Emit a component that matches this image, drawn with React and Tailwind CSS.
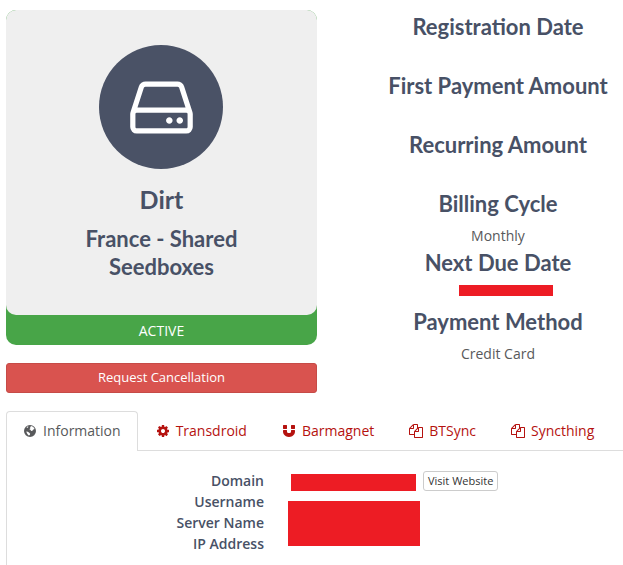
import React, { useState } from 'react';

const Icon = ({ d, className }) => (
  <svg viewBox="0 0 1792 1792" fill="currentColor" aria-hidden="true" className={className}>
    <path d={d} />
  </svg>
);

const hddPath =
  'M1168 1216q0 33-23.5 56.5t-56.5 23.5-56.5-23.5-23.5-56.5 23.5-56.5 56.5-23.5 56.5 23.5 23.5 56.5zm256 0q0 33-23.5 56.5t-56.5 23.5-56.5-23.5-23.5-56.5 23.5-56.5 56.5-23.5 56.5 23.5 23.5 56.5zm112 160v-320q0-13-9.5-22.5t-22.5-9.5h-1216q-13 0-22.5 9.5t-9.5 22.5v320q0 13 9.5 22.5t22.5 9.5h1216q13 0 22.5-9.5t9.5-22.5zm-1230-480h1180l-157-482q-4-13-16-21.5t-26-8.5h-782q-14 0-26 8.5t-16 21.5zm1358 160v320q0 66-47 113t-113 47h-1216q-66 0-113-47t-47-113v-320q0-25 16-75l197-606q17-53 63-86t101-33h782q55 0 101 33t63 86l197 606q16 50 16 75z';
const globePath =
  'M896 128a768 768 0 1 0 0 1536a768 768 0 1 0 0-1536zM1030 270l190 60 180 150 80 170-150 60-130 150-150 20-110-130-130-70 130-140-30-140zM500 380l140-90 50 90-110 90-100 50zM420 960l200 40 180 120 120 130-50 170-130 60-130-150-120-180z';
const cogPath =
  'M1152 896q0-106-75-181t-181-75-181 75-75 181 75 181 181 75 181-75 75-181zm512-109v222q0 12-8 23t-20 13l-185 28q-19 54-39 91 35 50 107 138 10 12 10 25t-9 23q-27 37-99 108t-94 71q-12 0-26-9l-138-108q-44 23-91 38-16 136-29 186-7 28-36 28h-222q-14 0-24.5-8.5t-11.5-21.5l-28-184q-49-16-90-37l-141 107q-10 9-25 9-14 0-25-11-126-114-165-168-7-10-7-23 0-12 8-23 15-21 51-66.5t54-70.5q-27-50-41-99l-183-27q-13-2-21-12.5t-8-23.5v-222q0-12 8-23t19-13l186-28q14-46 39-92-40-57-107-138-10-12-10-24 0-10 9-23 26-36 98.5-107.5t94.5-71.5q13 0 26 10l138 107q44-23 91-38 16-136 29-186 7-28 36-28h222q14 0 24.5 8.5t11.5 21.5l28 184q49 16 90 37l142-107q9-9 24-9 13 0 25 10 129 119 165 170 7 8 7 22 0 12-8 23-15 21-51 66.5t-54 70.5q26 50 41 98l183 28q13 2 21 12.5t8 23.5z';
const magnetPath =
  'M1664 832v128q0 201-98.5 362t-274 251.5-395.5 90.5-395.5-90.5-274-251.5-98.5-362v-128q0-26 19-45t45-19h384q26 0 45 19t19 45v128q0 52 23.5 90t53.5 57 71 30 64 13 44 2 44-2 64-13 71-30 53.5-57 23.5-90v-128q0-26 19-45t45-19h384q26 0 45 19t19 45zm-1024-640v384q0 26-19 45t-45 19h-384q-26 0-45-19t-19-45v-384q0-26 19-45t45-19h384q26 0 45 19t19 45zm1024 0v384q0 26-19 45t-45 19h-384q-26 0-45-19t-19-45v-384q0-26 19-45t45-19h384q26 0 45 19t19 45z';
const filesPath =
  'M1696 384q40 0 68 28t28 68v1216q0 40-28 68t-68 28h-960q-40 0-68-28t-28-68v-288h-544q-40 0-68-28t-28-68v-672q0-40 20-88t48-76l408-408q28-28 76-48t88-20h416q40 0 68 28t28 68v328q68-40 128-40h416zm-544 213l-299 299h299v-299zm-640-384l-299 299h299v-299zm196 647l316-316v-416h-384v416q0 40-28 68t-68 28h-416v640h512v-256q0-40 20-88t48-76zm956 804v-1152h-384v416q0 40-28 68t-68 28h-416v640h896z';

const tabs = [
  { name: 'Information', icon: globePath },
  { name: 'Transdroid', icon: cogPath },
  { name: 'Barmagnet', icon: magnetPath },
  { name: 'BTSync', icon: filesPath },
  { name: 'Syncthing', icon: filesPath },
];

const billing = [
  { label: 'Registration Date' },
  { label: 'First Payment Amount' },
  { label: 'Recurring Amount' },
  { label: 'Billing Cycle', value: 'Monthly' },
  { label: 'Next Due Date', hidden: true },
  { label: 'Payment Method', value: 'Credit Card' },
];

const ProductCard = () => (
  <div className="w-[50.4%]">
    <div className="rounded-[10px] bg-[#48a548] text-center">
      <div className="rounded-[10px] bg-[#efefef] px-12 pt-[35px] pb-[34px] font-[Lato,sans-serif] font-bold text-[#485166]">
        <div className="mx-auto flex size-[124px] items-center justify-center rounded-full bg-[#4a5266] text-white">
          <Icon d={hddPath} className="size-[73px]" />
        </div>
        <h2 className="mt-3.5 text-[25px] leading-8">Dirt</h2>
        <h3 className="mt-2.5 text-[22px] leading-7">France - Shared Seedboxes</h3>
      </div>
      <p className="pt-px text-sm leading-[29px] text-white">ACTIVE</p>
    </div>
    <button className="mt-[18px] h-[30px] w-full rounded-[3px] border border-[#c64b47] bg-[#d9534f] text-[13px] text-white">
      Request Cancellation
    </button>
  </div>
);

const BillingInfo = () => (
  <dl className="flex-1 pt-px pl-14 text-center">
    {billing.map((item) => (
      <div key={item.label} className="h-[59px]">
        <dt className="font-[Lato,sans-serif] text-[22px] leading-8 font-bold text-[#485166]">{item.label}</dt>
        <dd className="pt-1.5 text-sm leading-5">
          {item.value}
          {item.hidden && <span className="mx-auto block h-[11px] w-[94px] translate-x-2 bg-[#ed1c24]" />}
        </dd>
      </div>
    ))}
  </dl>
);

const App = () => {
  const [active, setActive] = useState('Information');

  return (
    <main className="overflow-hidden bg-white pt-2.5 pl-1.5 font-['Open_Sans',sans-serif] text-[#58595b]">
      <div className="flex">
        <ProductCard />
        <BillingInfo />
      </div>

      <div role="tablist" className="mt-[18px] flex border-b border-[#ddd]">
        {tabs.map((tab) => (
          <button
            key={tab.name}
            role="tab"
            aria-selected={active === tab.name}
            onClick={() => setActive(tab.name)}
            className={
              active === tab.name
                ? '-mb-px mr-px flex h-10 items-center gap-1.5 rounded-t border border-b-0 border-[#ddd] bg-white px-4 pb-0.5 text-sm'
                : '-mb-px mr-px flex h-10 items-center gap-1.5 border border-b-0 border-transparent px-4 pb-0.5 text-sm text-[#b5120f]'
            }
          >
            <Icon d={tab.icon} className="size-3.5" />
            {tab.name}
          </button>
        ))}
      </div>

      <div className="border-l border-[#ddd] pt-[19px] pb-3 text-sm">
        <div className="flex gap-6">
          <div className="w-[257px] text-right leading-[21px] font-semibold text-[#485166]">
            <p>Domain</p>
            <p>Username</p>
            <p>Server Name</p>
            <p>IP Address</p>
          </div>
          <div>
            <div className="flex items-end gap-[7px] pt-px pl-[3px]">
              <span className="h-[17px] w-[125px] bg-[#ed1c24]" />
              <button className="h-5 rounded-[3px] border border-[#ccc] px-1 text-[11px] leading-4 text-[#333]">
                Visit Website
              </button>
            </div>
            <div className="mt-2.5 h-[45px] w-[132px] bg-[#ed1c24]" />
          </div>
        </div>
      </div>
    </main>
  );
};

export default App;
